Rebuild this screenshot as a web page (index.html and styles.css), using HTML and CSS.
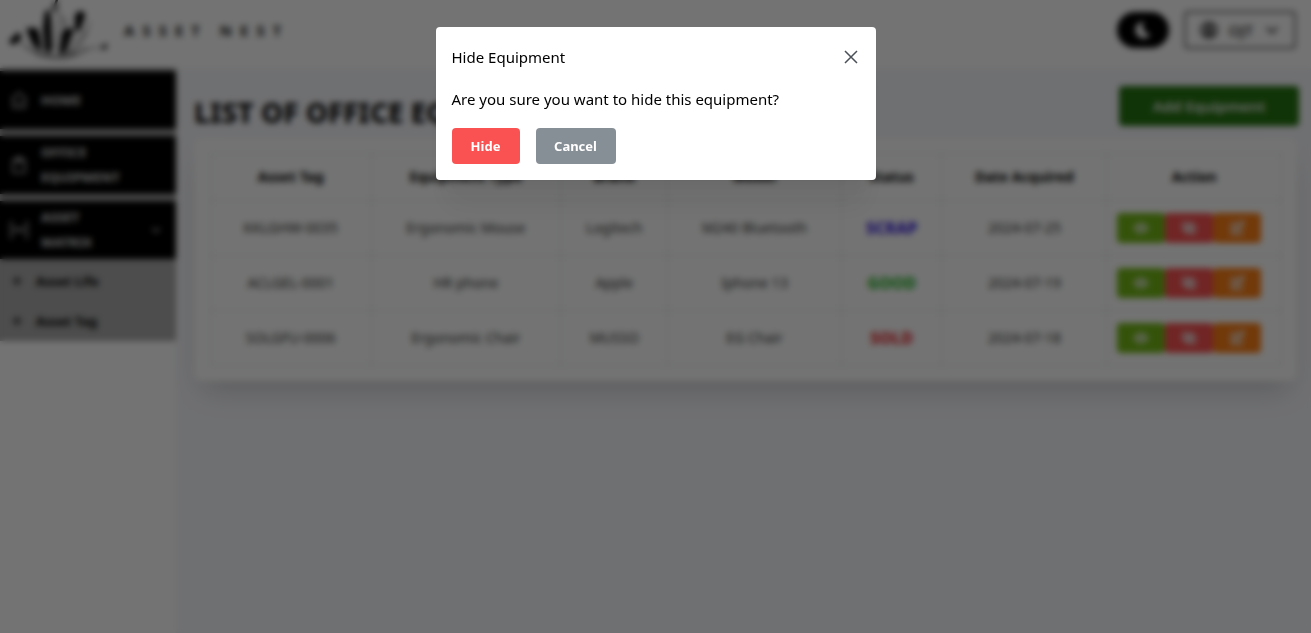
FILE: index.html
```html
<!DOCTYPE html>
<html lang="en">
<head>
<meta charset="utf-8">
<title>Asset Nest</title>
<link rel="stylesheet" href="styles.css">
</head>
<body>
<svg class="sprite" aria-hidden="true">
  <symbol id="eye" viewBox="0 0 24 24"><path fill="currentColor" fill-rule="evenodd" d="M12 4C7 4 3 8 1 12c2 4 6 8 11 8s9-4 11-8c-2-4-6-8-11-8zm0 13a5 5 0 1 1 0-10 5 5 0 0 1 0 10zm0-8a3 3 0 1 0 0 6 3 3 0 0 0 0-6z"/></symbol>
  <symbol id="eye-off" viewBox="0 0 24 24" fill="none" stroke="currentColor" stroke-width="3"><path d="M2 2l20 20M10 5q8-1 12 7l-3 4M6 7l-4 5q5 8 14 7M9 10q-2 5 4 6M12 8q4 0 4 4"/></symbol>
  <symbol id="edit" viewBox="0 0 24 24" fill="none" stroke="currentColor" stroke-width="3"><path d="M11 5H4v16h15v-7M9 16l1-5L20 1l3 3-10 10z"/></symbol>
  <symbol id="chevron" viewBox="0 0 24 24" fill="none" stroke="currentColor" stroke-width="3"><path d="M4 8l8 8 8-8"/></symbol>
  <symbol id="plus" viewBox="0 0 24 24" fill="none" stroke="currentColor" stroke-width="4"><path d="M12 2v20M2 12h20"/></symbol>
</svg>
<header class="topbar">
  <a class="brand" href="#">
    <svg class="logo" viewBox="0 0 102 64" aria-hidden="true">
      <path d="M3 43l9-9 4 5-4 5-6 3z M20 30l11 0 3 9 1 14-4-2-5-6z M37 31l2-17 4-3 2 10 1 30-3 5-4-4z M46 12L50 1l2 1-3 12z M56 35l4-5 8 1-6 16-3 8-6 1z M69 17l4-4 5 1 1 4-5 14-5 1z M95 50l5-5 1 3-2 4z"/>
      <g fill="none" stroke="currentColor" opacity=".6"><path d="M12 43q39 30 72 7M16 47q34 23 62 5M22 51q26 12 48 3M29 56q24 8 42-2M62 55q16-8 22-32M64 55q14-12 15-24M72 51q14 0 24-2M49 53l5-36 5 4-3 8M38 53L28 34M61 55l12-22M66 54l15-20M56 21l5 4-2 5M50 10l4 2-5 6"/></g>
    </svg>
    <span>ASSET NEST</span>
  </a>
  <div class="tools">
    <button class="theme" type="button" aria-label="Dark mode"><svg viewBox="0 0 24 24"><path fill="currentColor" d="M13 1C9 8 13 17 22 18A11 11 0 1 1 13 1z"/></svg></button>
    <button class="user" type="button">
      <svg viewBox="0 0 24 24" fill="none" stroke="currentColor" stroke-width="3"><circle cx="12" cy="12" r="10"/><circle cx="12" cy="10" r="3"/><path d="M5 19q7-6 14 0"/></svg>
      <span>OJT</span>
      <svg class="small"><use href="#chevron"/></svg>
    </button>
  </div>
</header>
<div class="shell">
  <aside class="sidebar">
    <nav class="menu">
      <a class="item" href="#"><svg viewBox="0 0 24 24" fill="none" stroke="currentColor" stroke-width="2"><path d="M2 11l10-9 10 9M4 9v13h16V9M8 15q4 4 8 0"/></svg><span>HOME</span></a>
      <a class="item" href="#"><svg viewBox="0 0 24 24" fill="none" stroke="currentColor" stroke-width="2"><path d="M4 5h16v17H4zM9 5V2h6v3M8 8h8"/></svg><span>OFFICE EQUIPMENT</span></a>
      <a class="item" href="#"><svg viewBox="0 0 24 24" fill="none" stroke="currentColor" stroke-width="2"><path d="M4 2H1v20h3M20 2h3v20h-3M7 16V9l5 4 5-4v7"/></svg><span>ASSET<br>MATRIX</span><svg class="arrow"><use href="#chevron"/></svg></a>
      <a class="sub" href="#"><svg><use href="#plus"/></svg><span>Asset Life</span></a>
      <a class="sub" href="#"><svg><use href="#plus"/></svg><span>Asset Tag</span></a>
    </nav>
  </aside>
  <main class="content">
    <div class="heading"><h1>LIST OF OFFICE EQUIPMENT</h1><button class="add" type="button">Add Equipment</button></div>
    <section class="card">
      <table>
        <colgroup><col class="c-tag"><col class="c-type"><col class="c-brand"><col class="c-model"><col class="c-status"><col class="c-date"><col class="c-action"></colgroup>
        <thead><tr><th>Asset Tag</th><th>Equipment Type</th><th>Brand</th><th>Model</th><th>Status</th><th>Date Acquired</th><th>Action</th></tr></thead>
        <tbody>
          <tr><td>KKLGHW-0035</td><td>Ergonomic Mouse</td><td>Logitech</td><td>M240 Bluetooth</td><td class="status scrap">SCRAP</td><td>2024-07-25</td><td><div class="actions"><button class="view" type="button" aria-label="View"><svg><use href="#eye"/></svg></button><button class="hide" type="button" aria-label="Hide"><svg><use href="#eye-off"/></svg></button><button class="edit" type="button" aria-label="Edit"><svg><use href="#edit"/></svg></button></div></td></tr>
          <tr><td>ACLGEL-0001</td><td>HR phone</td><td>Apple</td><td>Iphone 13</td><td class="status good">GOOD</td><td>2024-07-19</td><td><div class="actions"><button class="view" type="button" aria-label="View"><svg><use href="#eye"/></svg></button><button class="hide" type="button" aria-label="Hide"><svg><use href="#eye-off"/></svg></button><button class="edit" type="button" aria-label="Edit"><svg><use href="#edit"/></svg></button></div></td></tr>
          <tr><td>SOLGFU-0006</td><td>Ergonomic Chair</td><td>MUSSO</td><td>EG Chair</td><td class="status sold">SOLD</td><td>2024-07-18</td><td><div class="actions"><button class="view" type="button" aria-label="View"><svg><use href="#eye"/></svg></button><button class="hide" type="button" aria-label="Hide"><svg><use href="#eye-off"/></svg></button><button class="edit" type="button" aria-label="Edit"><svg><use href="#edit"/></svg></button></div></td></tr>
        </tbody>
      </table>
    </section>
  </main>
</div>
<div class="overlay">
  <div class="modal" role="dialog" aria-modal="true" aria-labelledby="modal-title">
    <div class="modal-head"><h2 id="modal-title">Hide Equipment</h2><button class="close" type="button" aria-label="Close"><svg viewBox="0 0 16 16" fill="none" stroke="currentColor" stroke-width="1.500"><path d="M2 2l12 12M14 2L2 14"/></svg></button></div>
    <p>Are you sure you want to hide this equipment?</p>
    <div class="modal-actions"><button class="confirm" type="button">Hide</button><button class="cancel" type="button">Cancel</button></div>
  </div>
</div>
</body>
</html>
```

FILE: styles.css
```css
* { box-sizing: border-box; }
body {
  margin: 0;
  min-height: 100vh;
  display: flex;
  flex-direction: column;
  background: #f7f8fc;
  color: #000;
  font: 15px/24px "Noto Sans", sans-serif;
}
button { font: inherit; border: 0; padding: 0; cursor: pointer; }
a { color: inherit; text-decoration: none; }
h1, h2, p { margin: 0; }
svg { flex: none; }
.sprite { position: absolute; width: 0; height: 0; }

.topbar {
  display: flex;
  align-items: center;
  justify-content: space-between;
  height: 68px;
  padding: 0 15px 8px 6px;
  background: #fff;
}
.brand { display: flex; align-items: center; gap: 16px; font-weight: 700; letter-spacing: 8px; font-size: 15px; color: #222; }
.logo { width: 102px; height: 64px; fill: currentColor; color: #000; }
.tools { display: flex; align-items: center; gap: 15px; }
.theme { display: flex; align-items: center; justify-content: center; width: 52px; height: 36px; border-radius: 18px; background: #000; color: #fff; }
.theme svg { width: 18px; height: 18px; }
.user { display: flex; align-items: center; justify-content: space-between; width: 112px; height: 38px; padding: 0 14px; border: 2px solid #666; border-radius: 4px; background: #fff; color: #222; font-size: 15px; font-weight: 500; }
.user svg { width: 18px; height: 18px; }
.user .small { width: 16px; height: 16px; }

.shell { display: flex; flex: 1; }
.sidebar { width: 176px; flex: none; background: #fff; }
.menu { background: #aaa; padding-top: 3px; }
.item { display: flex; align-items: center; gap: 13px; height: 58px; margin-bottom: 7px; padding: 0 14px 0 10px; background: #000; color: #ccc; font-weight: 800; font-size: 13px; line-height: 25px; }
.item:nth-child(3) { margin-bottom: 2px; }
.item svg { width: 18px; height: 18px; }
.item span { flex: 1; }
.item .arrow { width: 12px; height: 12px; }
.sub { display: flex; align-items: center; gap: 14px; height: 40px; padding: 0 12px; font-weight: 700; font-size: 13px; }
.sub svg { width: 10px; height: 10px; }

.content { flex: 1; min-width: 0; padding: 18px 14px 18px 18px; }
.heading { display: flex; justify-content: space-between; align-items: center; height: 40px; margin-bottom: 12px; }
h1 { padding-top: 12px; font: 800 28px/36px "Noto Sans", sans-serif; color: #111; }
.add { width: 180px; height: 40px; margin-right: -2px; border-radius: 4px; background: #257310; color: #eee; font-weight: 600; }
.card { padding: 15px 15px 15px 16px; border-radius: 8px; background: #fff; box-shadow: 0 16px 28px -8px rgba(0, 0, 0, .18); }
table { width: 100%; border-collapse: collapse; table-layout: fixed; font-size: 14px; text-align: center; }
.c-tag { width: 15%; }
.c-type { width: 17.700%; }
.c-brand { width: 10%; }
.c-model { width: 16.200%; }
.c-status { width: 9.400%; }
.c-date { width: 15.400%; }
th, td { height: 55px; padding: 0 10px; border: 1px solid #e2e6ea; }
th { height: 47px; font-weight: 700; }
td { color: #333; }
.status { font-weight: 800; font-size: 16px; }
.scrap { color: #3b1fe0; }
.good { color: #22b422; }
.sold { color: #e8232b; }
.actions { display: flex; }
.actions button { display: flex; align-items: center; justify-content: center; width: 48px; height: 30px; border-radius: 4px; color: #eee; }
.actions svg { width: 16px; height: 16px; }
.actions .view { background: #74b816; }
.actions .hide { background: #fa5252; }
.actions .edit { background: #fd7e14; }

.overlay {
  position: fixed;
  inset: 0;
  display: flex;
  align-items: flex-start;
  justify-content: center;
  padding: 27px 16px;
  background: rgba(0, 0, 0, .55);
  backdrop-filter: blur(3px);
}
.modal { width: 440px; padding: 16px; border-radius: 4px; background: #fff; box-shadow: 0 1px 3px rgba(0, 0, 0, .05), 0 36px 28px -7px rgba(0, 0, 0, .05), 0 17px 17px -7px rgba(0, 0, 0, .04); }
.modal-head { display: flex; align-items: center; justify-content: space-between; height: 28px; margin-bottom: 16px; padding-right: 1px; }
h2 { font-size: 15px; font-weight: 400; }
.close { display: flex; align-items: center; justify-content: center; width: 16px; height: 28px; background: none; color: #495057; }
.close svg { width: 16px; height: 16px; }
.modal-actions { display: flex; gap: 16px; margin-top: 17px; }
.modal-actions button { height: 36px; border-radius: 4px; color: #fff; font-weight: 700; font-size: 13px; }
.modal-actions .confirm { min-width: 68px; background: #fa5252; }
.modal-actions .cancel { min-width: 80px; background: #868e96; }
```
